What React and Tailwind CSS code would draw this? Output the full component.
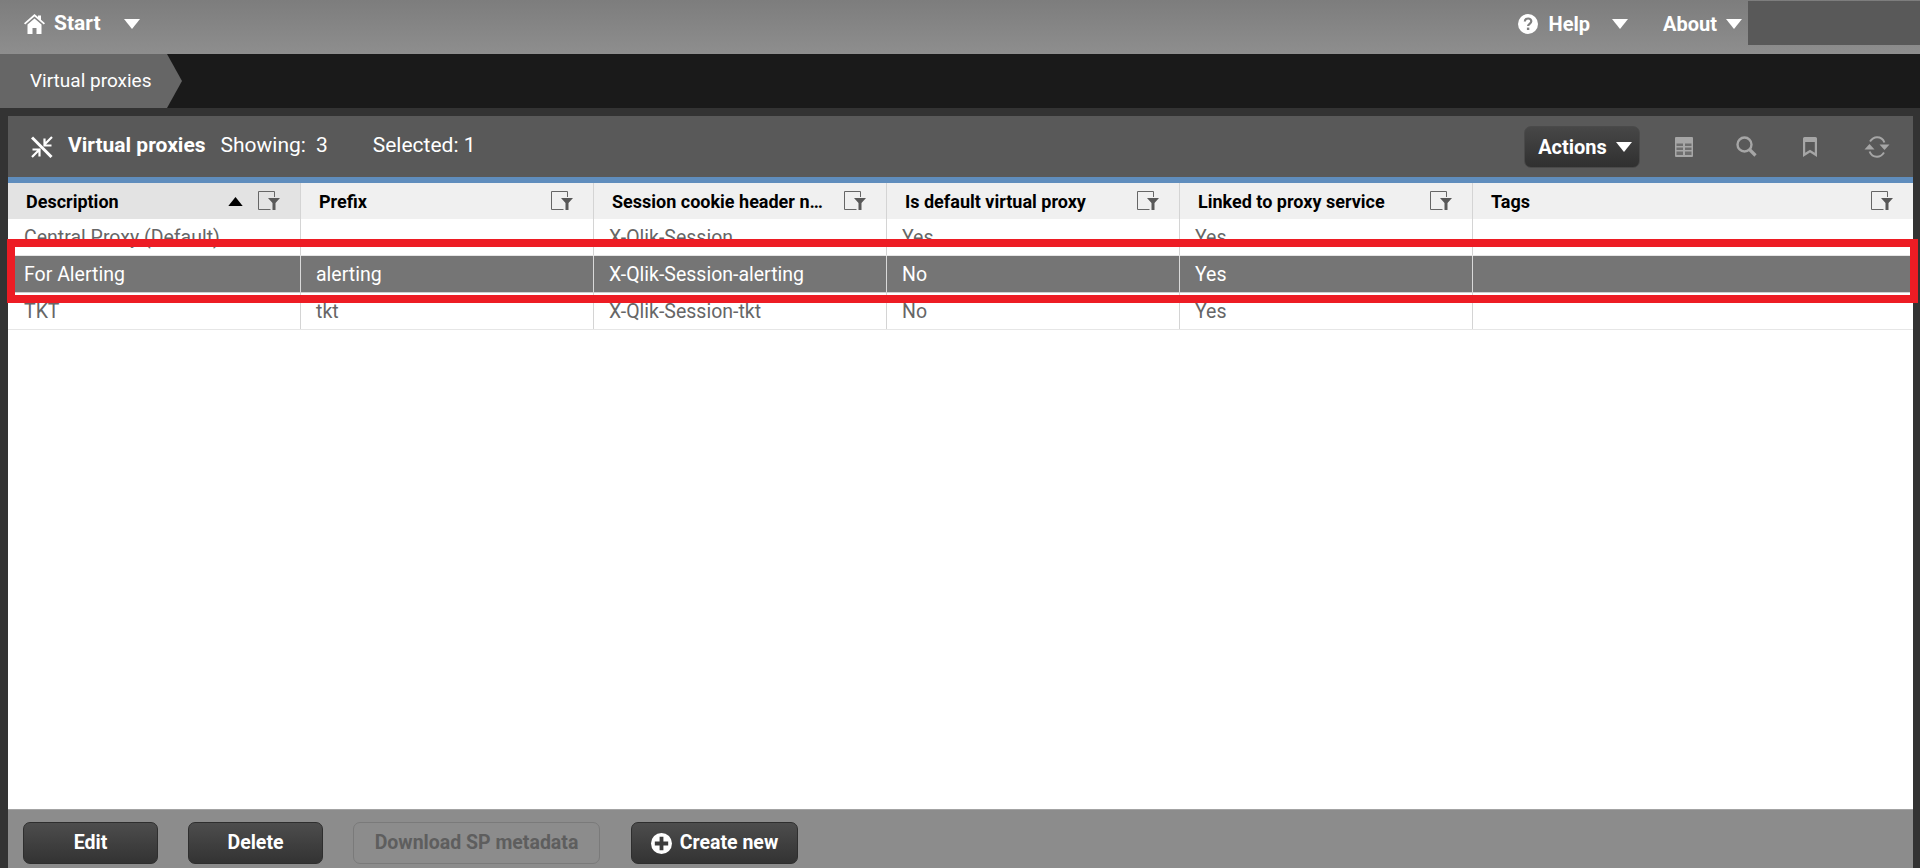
import React from 'react';

const columns = [
  { label: 'Description', sorted: true },
  { label: 'Prefix' },
  { label: 'Session cookie header n…' },
  { label: 'Is default virtual proxy' },
  { label: 'Linked to proxy service' },
  { label: 'Tags' },
];

const rows = [
  ['Central Proxy (Default)', '', 'X-Qlik-Session', 'Yes', 'Yes', ''],
  ['For Alerting', 'alerting', 'X-Qlik-Session-alerting', 'No', 'Yes', ''],
  ['TKT', 'tkt', 'X-Qlik-Session-tkt', 'No', 'Yes', ''],
];

const gridCols = 'grid grid-cols-[293px_293px_293px_293px_293px_1fr]';

function Caret({ className }) {
  return (
    <svg viewBox="0 0 16 10" className={className}>
      <path d="M0 0h16L8 10z" fill="currentColor" />
    </svg>
  );
}

function FilterIcon() {
  return (
    <svg viewBox="0 0 22 20" className="w-[22px] h-[20px] shrink-0">
      <path d="M16.5 6V.5H.5v18h12" fill="none" stroke="#666" strokeWidth="1" />
      <path d="M10 7h12l-4.5 5v7h-3v-7z" fill="#595959" />
    </svg>
  );
}

function HomeIcon() {
  return (
    <svg viewBox="0 0 21 20" className="w-[21px] h-[20px]" fill="#fff">
      <path d="M10.5 0L14 3V1.5h3v4.2l4 3.6-1.2 1.3-9.3-8.2-9.3 8.2L0 9.3z" />
      <path d="M3.5 10.5l7-6 7 6V20h-5v-6h-4v6h-5z" />
    </svg>
  );
}

function HelpIcon() {
  return (
    <svg viewBox="0 0 20 20" className="w-[20px] h-[20px]">
      <circle cx="10" cy="10" r="10" fill="#fff" />
      <path d="M6.8 7.6c0-2 1.4-3.1 3.3-3.1 1.9 0 3.2 1.1 3.2 2.8 0 2.4-3.2 2.5-3.2 4.7" fill="none" stroke="#808080" strokeWidth="2.2" />
      <rect x="8.9" y="13.6" width="2.4" height="2.4" fill="#808080" />
    </svg>
  );
}

function CollapseIcon() {
  return (
    <svg viewBox="0 0 22 22" className="w-[22px] h-[22px]" fill="none" stroke="#fff" strokeWidth="3">
      <path d="M1 1.5l19.5 19.5" />
      <path d="M13 9l8-8M13.5 2.5v7h7" strokeWidth="2.2" />
      <path d="M9 13l-8 8M1.5 13.5h7v7" strokeWidth="2.2" />
    </svg>
  );
}

function TableIcon() {
  return (
    <svg viewBox="0 0 18 20" className="w-[18px] h-[20px]">
      <rect width="18" height="20" rx="1" fill="#a6a6a6" />
      <path d="M1.5 6.5h6.5v2.5H1.5zM10 6.5h6.5v2.5H10zM1.5 10.5h6.5V13H1.5zM10 10.5h6.500V13H10zM1.500 14.500h6.500v3.500H1.500zM10 14.500h6.500v3.500H10z" fill="#6e6e6e" />
    </svg>
  );
}

function SearchIcon() {
  return (
    <svg viewBox="0 0 21 21" className="w-[21px] h-[21px]" fill="none" stroke="#a6a6a6">
      <circle cx="8.5" cy="8.5" r="7" strokeWidth="2.4" />
      <path d="M13.5 13.5l6 6" strokeWidth="3.2" />
    </svg>
  );
}

function BookmarkIcon() {
  return (
    <svg viewBox="0 0 14 20" className="w-[14px] h-[20px]">
      <path d="M0 1.5A1.5 1.5 0 0 1 1.5 0h11A1.5 1.5 0 0 1 14 1.5V20l-7-4.5L0 20zM2.2 5v10.8L7 12.8l4.8 3V5z" fill="#a6a6a6" fillRule="evenodd" />
    </svg>
  );
}

function RefreshIcon() {
  return (
    <svg viewBox="0 0 26 22" className="w-[26px] h-[22px]" fill="none" stroke="#a6a6a6" strokeWidth="2">
      <path d="M6 5.500C8 2.500 10.500 1.200 13 1.200c3.500 0 6.300 2.200 7.400 5.300" />
      <path d="M20 16.500c-2 3-4.500 4.300-7 4.300-3.500 0-6.300-2.200-7.400-5.300" />
      <path d="M15.500 8.500h10l-5 5.500zM.5 13.500h10l-5-5.500z" fill="#a6a6a6" stroke="none" />
    </svg>
  );
}

function PlusIcon() {
  return (
    <svg viewBox="0 0 22 22" className="w-[21px] h-[21px]">
      <circle cx="11" cy="11" r="11" fill="#fff" />
      <path d="M9 4h4v5h5v4h-5v5H9v-5H4V9h5z" fill="#3d3d3d" />
    </svg>
  );
}

function FooterButton({ children, className, disabled }) {
  return (
    <button
      className={`h-[42px] rounded-[7px] border text-[19.5px] font-bold flex items-center justify-center ${
        disabled
          ? 'border-[#7a7a7a] text-[#5e5e5e]'
          : 'border-[#2e2e2e] text-white bg-gradient-to-b from-[#4d4d4d] to-[#333333]'
      } ${className}`}
    >
      {children}
    </button>
  );
}

export default function App() {
  return (
    <div className="h-[868px] overflow-hidden flex flex-col bg-[#333333] relative font-['Roboto',sans-serif]">
      {/* top nav */}
      <div className="h-[54px] shrink-0 bg-gradient-to-b from-[#7d7d7d] to-[#8e8e8e] flex items-start text-white font-bold text-[20px]">
        <div className="flex items-center h-[48px] pl-[24px]">
          <HomeIcon />
          <span className="ml-[9px] text-[21px]">Start</span>
          <Caret className="w-[16px] h-[10px] ml-[23px]" />
        </div>
        <div className="ml-auto flex items-center h-[48px]">
          <HelpIcon />
          <span className="ml-[11px]">Help</span>
          <Caret className="w-[16px] h-[10px] ml-[22px]" />
          <span className="ml-[35px]">About</span>
          <Caret className="w-[16px] h-[10px] ml-[9px]" />
        </div>
        <div className="w-[172px] h-[44px] mt-px ml-[6px] bg-[#595959]" />
      </div>

      {/* breadcrumb */}
      <div className="h-[54px] shrink-0 bg-[#1a1a1a] flex">
        <div className="w-[167px] bg-[#666666] text-white text-[19px] pl-[30px] pt-px flex items-center">Virtual proxies</div>
        <svg viewBox="0 0 15 54" className="w-[15px] h-[54px]">
          <path d="M0 0l15 27L0 54z" fill="#666666" />
        </svg>
      </div>

      {/* panel */}
      <div className="flex-1 min-h-0 flex flex-col mt-[8px] ml-[8px] mr-[7px]">
        <div className="h-[61px] shrink-0 bg-[#595959] flex items-center text-white text-[21px]">
          <div className="ml-[23px]"><CollapseIcon /></div>
          <span className="ml-[15px] mb-[2px] font-bold">Virtual proxies</span>
          <span className="ml-[15px] mb-[2px]">Showing:</span>
          <span className="ml-[10px] mb-[2px]">3</span>
          <span className="ml-[45px] mb-[2px]">Selected: 1</span>
          <div className="ml-auto flex items-center">
            <button className="w-[116px] h-[42px] rounded-[7px] border border-[#4a4a4a] bg-gradient-to-b from-[#474747] to-[#303030] text-[20px] font-bold flex items-center justify-center gap-[9px] pl-[6px]">
              Actions
              <Caret className="w-[16px] h-[10px]" />
            </button>
            <div className="ml-[35px]"><TableIcon /></div>
            <div className="ml-[43px]"><SearchIcon /></div>
            <div className="ml-[46px]"><BookmarkIcon /></div>
            <div className="ml-[47px] mr-[23px]"><RefreshIcon /></div>
          </div>
        </div>
        <div className="h-[6px] shrink-0 bg-[#5f8dbd]" />

        {/* table */}
        <div className="flex-1 min-h-0 bg-white">
          <div className={`${gridCols} h-[36px] bg-[#f0f0f0]`}>
            {columns.map((col) => (
              <div
                key={col.label}
                className={`flex items-center pl-[18px] pr-[20px] border-r border-[#d4d4d4] last:border-r-0 text-[18px] font-bold text-black ${
                  col.sorted ? 'bg-[#e3e3e3]' : ''
                }`}
              >
                <span className="whitespace-nowrap">{col.label}</span>
                <span className="ml-auto flex items-center">
                  {col.sorted && <Caret className="w-[15px] h-[9px] mr-[15px] text-black rotate-180" />}
                  <FilterIcon />
                </span>
              </div>
            ))}
          </div>
          {rows.map((row, i) => (
            <div
              key={row[0]}
              className={`${gridCols} h-[37px] border-b ${
                i === 1 ? 'bg-[#757575] text-white border-[#d0d0d0]' : 'text-[#666666] border-[#e6e6e6]'
              }`}
            >
              {row.map((cell, j) => (
                <div
                  key={j}
                  className={`flex items-center pl-[15px] pt-[2px] first:pl-[16px] border-r last:border-r-0 text-[19.5px] ${
                    i === 1 ? 'border-[#d9d9d9]' : 'border-[#d4d4d4]'
                  }`}
                >
                  {cell}
                </div>
              ))}
            </div>
          ))}
        </div>

        {/* footer */}
        <div className="h-[59px] shrink-0 bg-[#8c8c8c] border-t border-[#a3a3a3] flex items-start pt-[12px] pl-[15px]">
          <FooterButton className="w-[135px]">Edit</FooterButton>
          <FooterButton className="w-[135px] ml-[30px]">Delete</FooterButton>
          <FooterButton className="w-[247px] ml-[30px]" disabled>Download SP metadata</FooterButton>
          <FooterButton className="w-[167px] ml-[31px] gap-[8px]">
            <PlusIcon />
            Create new
          </FooterButton>
        </div>
      </div>

      {/* red highlight added on top of the screenshot */}
      <div className="absolute left-[7px] top-[239px] w-[1911px] h-[64px] border-[8px] border-[#ed1c24]" />
    </div>
  );
}
